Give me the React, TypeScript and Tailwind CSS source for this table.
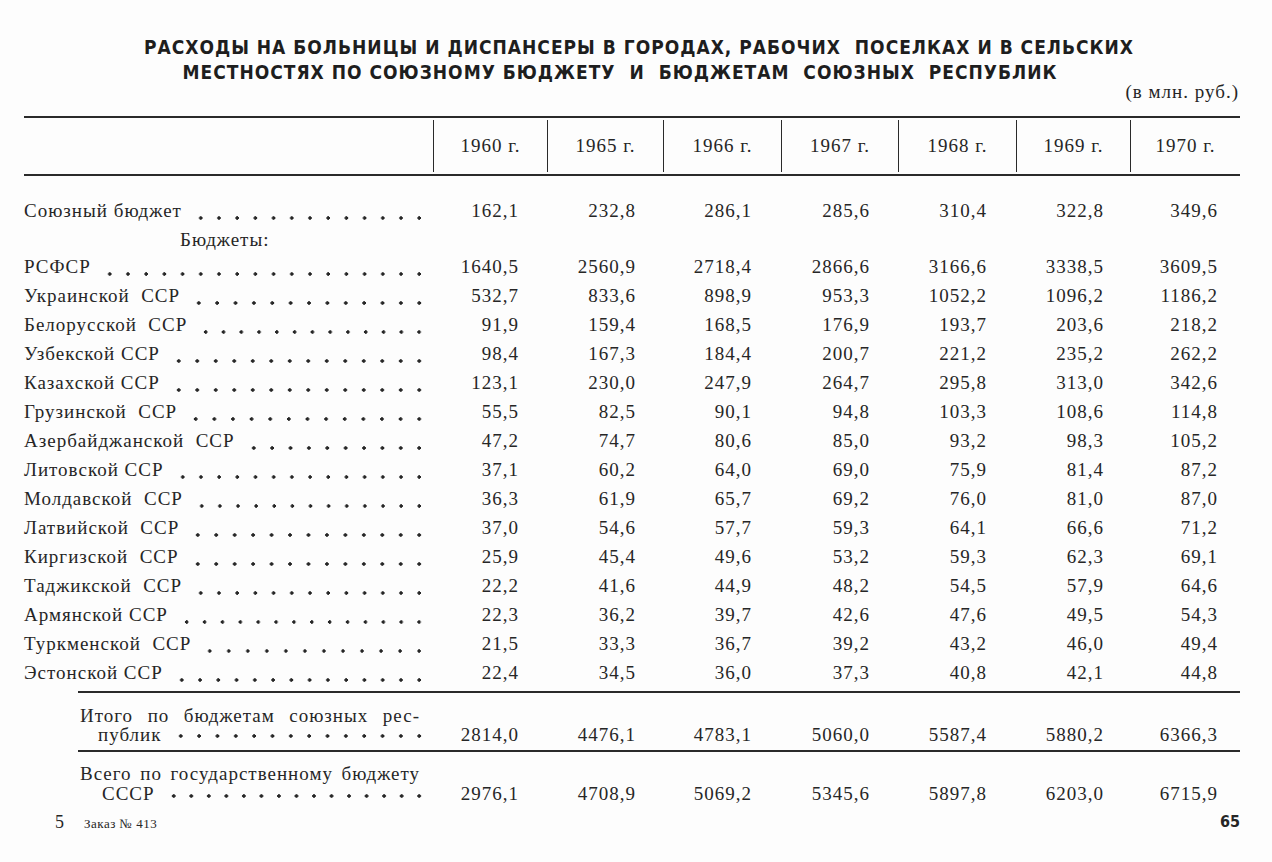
import React from "react";

const cols = "grid grid-cols-[409px_114px_116px_118px_117px_118px_114px_110px]";
const pads = ["pr-[28px]", "pr-[27px]", "pr-[29px]", "pr-[28px]", "pr-[29px]", "pr-[26px]", "pr-[22px]"];
const years = ["1960 г.", "1965 г.", "1966 г.", "1967 г.", "1968 г.", "1969 г.", "1970 г."];

const rows: [string, string[]][] = [
  ["РСФСР", ["1640,5", "2560,9", "2718,4", "2866,6", "3166,6", "3338,5", "3609,5"]],
  ["Украинской  ССР", ["532,7", "833,6", "898,9", "953,3", "1052,2", "1096,2", "1186,2"]],
  ["Белорусской  ССР", ["91,9", "159,4", "168,5", "176,9", "193,7", "203,6", "218,2"]],
  ["Узбекской ССР", ["98,4", "167,3", "184,4", "200,7", "221,2", "235,2", "262,2"]],
  ["Казахской ССР", ["123,1", "230,0", "247,9", "264,7", "295,8", "313,0", "342,6"]],
  ["Грузинской  ССР", ["55,5", "82,5", "90,1", "94,8", "103,3", "108,6", "114,8"]],
  ["Азербайджанской  ССР", ["47,2", "74,7", "80,6", "85,0", "93,2", "98,3", "105,2"]],
  ["Литовской ССР", ["37,1", "60,2", "64,0", "69,0", "75,9", "81,4", "87,2"]],
  ["Молдавской  ССР", ["36,3", "61,9", "65,7", "69,2", "76,0", "81,0", "87,0"]],
  ["Латвийской  ССР", ["37,0", "54,6", "57,7", "59,3", "64,1", "66,6", "71,2"]],
  ["Киргизской  ССР", ["25,9", "45,4", "49,6", "53,2", "59,3", "62,3", "69,1"]],
  ["Таджикской  ССР", ["22,2", "41,6", "44,9", "48,2", "54,5", "57,9", "64,6"]],
  ["Армянской ССР", ["22,3", "36,2", "39,7", "42,6", "47,6", "49,5", "54,3"]],
  ["Туркменской  ССР", ["21,5", "33,3", "36,7", "39,2", "43,2", "46,0", "49,4"]],
  ["Эстонской ССР", ["22,4", "34,5", "36,0", "37,3", "40,8", "42,1", "44,8"]],
];

function Dots() {
  return (
    <div className="flex-1 self-end mb-[5px] ml-[10px] mr-[5px] h-[6px] bg-[radial-gradient(circle,#262626_1.5px,transparent_1.9px)] bg-[length:17.5px_6px] bg-repeat-space bg-right" />
  );
}

function Values({ vals }: { vals: string[] }) {
  return (
    <>
      {vals.map((v, i) => (
        <div key={i} className={`text-right ${pads[i]}`}>
          {v}
        </div>
      ))}
    </>
  );
}

const sansFont = { fontFamily: '"Liberation Sans Narrow", "DejaVu Sans Condensed", "Liberation Sans", sans-serif' };

export default function App() {
  return (
    <div
      className="w-[1272px] h-[862px] bg-[#fdfdfd] text-[#262626] overflow-hidden text-[19px] tracking-[1px]"
      style={{ fontFamily: '"Liberation Serif", "Times New Roman", serif' }}
    >
      {/* Title */}
      <div
        className="pt-[35px] font-bold text-[19px] leading-[25px] tracking-[1px] text-[#1e1e1e] whitespace-pre"
        style={sansFont}
      >
        <div className="text-center pl-[6px]">РАСХОДЫ НА БОЛЬНИЦЫ И ДИСПАНСЕРЫ В ГОРОДАХ, РАБОЧИХ  ПОСЕЛКАХ И В СЕЛЬСКИХ</div>
        <div className="text-center pr-[32px]">МЕСТНОСТЯХ ПО СОЮЗНОМУ БЮДЖЕТУ  И  БЮДЖЕТАМ  СОЮЗНЫХ  РЕСПУБЛИК</div>
      </div>
      <div className="mt-[-3px] h-[20px] leading-[20px] text-right pr-[33px] text-[19px]">(в млн. руб.)</div>

      {/* Table */}
      <div className="ml-[24px] w-[1216px] mt-[14px]">
        <div className={`${cols} h-[60px] border-t-2 border-b-2 border-[#2a2a2a]`}>
          <div />
          {years.map((y) => (
            <div key={y} className="border-l border-[#2a2a2a] my-[2px] flex items-center justify-center">
              {y}
            </div>
          ))}
        </div>

        <div className="pt-[21px]">
          <div className={`${cols} h-[29px] items-center`}>
            <div className="flex h-full items-center">
              <span className="whitespace-pre">Союзный бюджет</span>
              <Dots />
            </div>
            <Values vals={["162,1", "232,8", "286,1", "285,6", "310,4", "322,8", "349,6"]} />
          </div>
          <div className="h-[27px] leading-[27px] pl-[156px]">Бюджеты:</div>
          {rows.map(([label, vals]) => (
            <div key={label} className={`${cols} h-[29px] items-center`}>
              <div className="flex h-full items-center">
                <span className="whitespace-pre">{label}</span>
                <Dots />
              </div>
              <Values vals={vals} />
            </div>
          ))}
        </div>

        <div className="ml-[54px] mt-[3px] h-[2px] bg-[#2a2a2a]" />

        <div className={`${cols} pt-[13px] leading-[19px] items-end`}>
          <div className="pl-[56px]">
            <div className="mr-[13px] text-justify [text-align-last:justify]">Итого по бюджетам союзных рес-</div>
            <div className="flex h-[19px] items-center pl-[18px]">
              <span className="whitespace-pre">публик</span>
              <Dots />
            </div>
          </div>
          <Values vals={["2814,0", "4476,1", "4783,1", "5060,0", "5587,4", "5880,2", "6366,3"]} />
        </div>

        <div className="ml-[54px] mt-[6px] h-[2px] bg-[#2a2a2a]" />

        <div className={`${cols} pt-[12px] leading-[20px] items-end`}>
          <div className="pl-[56px]">
            <div className="mr-[13px] text-justify [text-align-last:justify]">Всего по государственному бюджету</div>
            <div className="flex h-[20px] items-center pl-[22px]">
              <span className="whitespace-pre">СССР</span>
              <Dots />
            </div>
          </div>
          <Values vals={["2976,1", "4708,9", "5069,2", "5345,6", "5897,8", "6203,0", "6715,9"]} />
        </div>
      </div>

      {/* Footer */}
      <div className="mt-[8px] h-[20px] flex items-center justify-between pl-[55px] pr-[32px] tracking-normal">
        <div className="flex items-baseline gap-[20px]">
          <span className="text-[18px]">5</span>
          <span className="text-[13px] tracking-[0.5px]">Заказ № 413</span>
        </div>
        <span className="font-bold text-[16px]" style={sansFont}>
          65
        </span>
      </div>
    </div>
  );
}
